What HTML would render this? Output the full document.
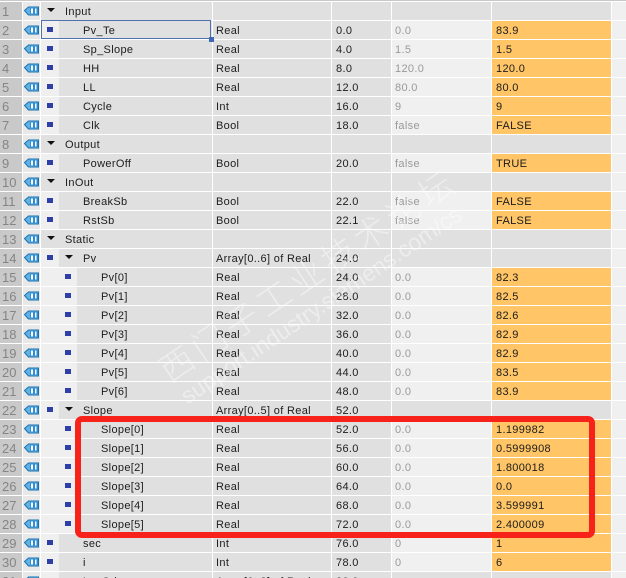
<!DOCTYPE html>
<html><head><meta charset="utf-8">
<style>
html,body{margin:0;padding:0;background:#fff}
#p{position:relative;width:626px;height:578px;overflow:hidden;background:#fff;font:11px/18px "Liberation Sans","Noto Sans CJK SC",sans-serif;letter-spacing:.33px;color:#1c1c1c}
#p>.top{position:absolute;left:0;top:0;width:626px;height:1px;background:#c8c8c8}
.r{position:absolute;left:0;width:626px;height:18px}
.r>*{position:absolute;top:0;height:18px;white-space:nowrap;line-height:20px;overflow:hidden}
.n{left:0;width:22px;background:#c9c9c9;color:#858585;font-size:13px;padding-left:2px;box-sizing:border-box;letter-spacing:0}
.ic{left:23px;width:17px;background:#e8e8e8}
.ic svg{position:absolute;left:1px;top:3px}
.a{left:41px;width:171px;background:#e0e0e0}
.l1:before,.l2:before{content:"";position:absolute;left:0;top:0;height:18px;background:#efefef}
.l1:before{width:18px}.l2:before{width:36px}
.a i{position:absolute}
.q{width:6px;height:5px;top:6px;background:#2f3fa8}
.t{width:0;height:0;top:6px;border-left:4px solid transparent;border-right:4px solid transparent;border-top:4px solid #111}
.a b{position:absolute;top:0;font-weight:normal}
.b{left:213px;width:118px;background:#e0e0e0;padding-left:3px;box-sizing:border-box}
.c{left:332px;width:59px;background:#e0e0e0;padding-left:4px;box-sizing:border-box}
.d{left:392px;width:99px;background:#f0f0f0;color:#9a9a9a;padding-left:3px;box-sizing:border-box}
.e{left:492px;width:119px;background:#ffc566;padding-left:4px;box-sizing:border-box}
.f{left:612px;width:14px;background:#f0f0f0}
.h .d,.h .e{background:#e0e0e0}
.wm{position:absolute;color:rgba(255,255,255,.42);white-space:nowrap;transform-origin:0 50%;letter-spacing:0}
</style></head><body>
<div id="p">
<svg width="0" height="0" style="position:absolute"><defs><g id="g"><path d="M.5 5.5 4.5 2H14.5V10H4.5Z" fill="#5fb4e6" stroke="#1d6fae" stroke-width="1"/><rect x="6" y="3" width="8" height="6" fill="#2e8fd4"/><rect x="7" y="3.5" width="2" height="5" fill="#fff"/><rect x="11" y="3.5" width="1.5" height="5" fill="#fff"/></g></defs></svg>
<div class="top"></div>

<div class="r h" style="top:2px"><span class="n">1</span><span class="ic"><svg width="16" height="12"><use href="#g"/></svg></span><span class="a"><i class="t" style="left:6px"></i><b style="left:24px">Input</b></span><span class="b"></span><span class="c"></span><span class="d"></span><span class="e"></span><span class="f"></span></div>
<div class="r" style="top:21px"><span class="n">2</span><span class="ic"><svg width="16" height="12"><use href="#g"/></svg></span><span class="a l1"><i class="q" style="left:6px"></i><b style="left:42px">Pv_Te</b></span><span class="b">Real</span><span class="c">0.0</span><span class="d">0.0</span><span class="e">83.9</span><span class="f"></span></div>
<div class="r" style="top:40px"><span class="n">3</span><span class="ic"><svg width="16" height="12"><use href="#g"/></svg></span><span class="a l1"><i class="q" style="left:6px"></i><b style="left:42px">Sp_Slope</b></span><span class="b">Real</span><span class="c">4.0</span><span class="d">1.5</span><span class="e">1.5</span><span class="f"></span></div>
<div class="r" style="top:59px"><span class="n">4</span><span class="ic"><svg width="16" height="12"><use href="#g"/></svg></span><span class="a l1"><i class="q" style="left:6px"></i><b style="left:42px">HH</b></span><span class="b">Real</span><span class="c">8.0</span><span class="d">120.0</span><span class="e">120.0</span><span class="f"></span></div>
<div class="r" style="top:78px"><span class="n">5</span><span class="ic"><svg width="16" height="12"><use href="#g"/></svg></span><span class="a l1"><i class="q" style="left:6px"></i><b style="left:42px">LL</b></span><span class="b">Real</span><span class="c">12.0</span><span class="d">80.0</span><span class="e">80.0</span><span class="f"></span></div>
<div class="r" style="top:97px"><span class="n">6</span><span class="ic"><svg width="16" height="12"><use href="#g"/></svg></span><span class="a l1"><i class="q" style="left:6px"></i><b style="left:42px">Cycle</b></span><span class="b">Int</span><span class="c">16.0</span><span class="d">9</span><span class="e">9</span><span class="f"></span></div>
<div class="r" style="top:116px"><span class="n">7</span><span class="ic"><svg width="16" height="12"><use href="#g"/></svg></span><span class="a l1"><i class="q" style="left:6px"></i><b style="left:42px">Clk</b></span><span class="b">Bool</span><span class="c">18.0</span><span class="d">false</span><span class="e">FALSE</span><span class="f"></span></div>
<div class="r h" style="top:135px"><span class="n">8</span><span class="ic"><svg width="16" height="12"><use href="#g"/></svg></span><span class="a"><i class="t" style="left:6px"></i><b style="left:24px">Output</b></span><span class="b"></span><span class="c"></span><span class="d"></span><span class="e"></span><span class="f"></span></div>
<div class="r" style="top:154px"><span class="n">9</span><span class="ic"><svg width="16" height="12"><use href="#g"/></svg></span><span class="a l1"><i class="q" style="left:6px"></i><b style="left:42px">PowerOff</b></span><span class="b">Bool</span><span class="c">20.0</span><span class="d">false</span><span class="e">TRUE</span><span class="f"></span></div>
<div class="r h" style="top:173px"><span class="n">10</span><span class="ic"><svg width="16" height="12"><use href="#g"/></svg></span><span class="a"><i class="t" style="left:6px"></i><b style="left:24px">InOut</b></span><span class="b"></span><span class="c"></span><span class="d"></span><span class="e"></span><span class="f"></span></div>
<div class="r" style="top:192px"><span class="n">11</span><span class="ic"><svg width="16" height="12"><use href="#g"/></svg></span><span class="a l1"><i class="q" style="left:6px"></i><b style="left:42px">BreakSb</b></span><span class="b">Bool</span><span class="c">22.0</span><span class="d">false</span><span class="e">FALSE</span><span class="f"></span></div>
<div class="r" style="top:211px"><span class="n">12</span><span class="ic"><svg width="16" height="12"><use href="#g"/></svg></span><span class="a l1"><i class="q" style="left:6px"></i><b style="left:42px">RstSb</b></span><span class="b">Bool</span><span class="c">22.1</span><span class="d">false</span><span class="e">FALSE</span><span class="f"></span></div>
<div class="r h" style="top:230px"><span class="n">13</span><span class="ic"><svg width="16" height="12"><use href="#g"/></svg></span><span class="a"><i class="t" style="left:6px"></i><b style="left:24px">Static</b></span><span class="b"></span><span class="c"></span><span class="d"></span><span class="e"></span><span class="f"></span></div>
<div class="r h" style="top:249px"><span class="n">14</span><span class="ic"><svg width="16" height="12"><use href="#g"/></svg></span><span class="a l1"><i class="q" style="left:6px"></i><i class="t" style="left:24px"></i><b style="left:42px">Pv</b></span><span class="b">Array[0..6] of Real</span><span class="c">24.0</span><span class="d"></span><span class="e"></span><span class="f"></span></div>
<div class="r" style="top:268px"><span class="n">15</span><span class="ic"><svg width="16" height="12"><use href="#g"/></svg></span><span class="a l2"><i class="q" style="left:24px"></i><b style="left:60px">Pv[0]</b></span><span class="b">Real</span><span class="c">24.0</span><span class="d">0.0</span><span class="e">82.3</span><span class="f"></span></div>
<div class="r" style="top:287px"><span class="n">16</span><span class="ic"><svg width="16" height="12"><use href="#g"/></svg></span><span class="a l2"><i class="q" style="left:24px"></i><b style="left:60px">Pv[1]</b></span><span class="b">Real</span><span class="c">28.0</span><span class="d">0.0</span><span class="e">82.5</span><span class="f"></span></div>
<div class="r" style="top:306px"><span class="n">17</span><span class="ic"><svg width="16" height="12"><use href="#g"/></svg></span><span class="a l2"><i class="q" style="left:24px"></i><b style="left:60px">Pv[2]</b></span><span class="b">Real</span><span class="c">32.0</span><span class="d">0.0</span><span class="e">82.6</span><span class="f"></span></div>
<div class="r" style="top:325px"><span class="n">18</span><span class="ic"><svg width="16" height="12"><use href="#g"/></svg></span><span class="a l2"><i class="q" style="left:24px"></i><b style="left:60px">Pv[3]</b></span><span class="b">Real</span><span class="c">36.0</span><span class="d">0.0</span><span class="e">82.9</span><span class="f"></span></div>
<div class="r" style="top:344px"><span class="n">19</span><span class="ic"><svg width="16" height="12"><use href="#g"/></svg></span><span class="a l2"><i class="q" style="left:24px"></i><b style="left:60px">Pv[4]</b></span><span class="b">Real</span><span class="c">40.0</span><span class="d">0.0</span><span class="e">82.9</span><span class="f"></span></div>
<div class="r" style="top:363px"><span class="n">20</span><span class="ic"><svg width="16" height="12"><use href="#g"/></svg></span><span class="a l2"><i class="q" style="left:24px"></i><b style="left:60px">Pv[5]</b></span><span class="b">Real</span><span class="c">44.0</span><span class="d">0.0</span><span class="e">83.5</span><span class="f"></span></div>
<div class="r" style="top:382px"><span class="n">21</span><span class="ic"><svg width="16" height="12"><use href="#g"/></svg></span><span class="a l2"><i class="q" style="left:24px"></i><b style="left:60px">Pv[6]</b></span><span class="b">Real</span><span class="c">48.0</span><span class="d">0.0</span><span class="e">83.9</span><span class="f"></span></div>
<div class="r h" style="top:401px"><span class="n">22</span><span class="ic"><svg width="16" height="12"><use href="#g"/></svg></span><span class="a l1"><i class="q" style="left:6px"></i><i class="t" style="left:24px"></i><b style="left:42px">Slope</b></span><span class="b">Array[0..5] of Real</span><span class="c">52.0</span><span class="d"></span><span class="e"></span><span class="f"></span></div>
<div class="r" style="top:420px"><span class="n">23</span><span class="ic"><svg width="16" height="12"><use href="#g"/></svg></span><span class="a l2"><i class="q" style="left:24px"></i><b style="left:60px">Slope[0]</b></span><span class="b">Real</span><span class="c">52.0</span><span class="d">0.0</span><span class="e">1.199982</span><span class="f"></span></div>
<div class="r" style="top:439px"><span class="n">24</span><span class="ic"><svg width="16" height="12"><use href="#g"/></svg></span><span class="a l2"><i class="q" style="left:24px"></i><b style="left:60px">Slope[1]</b></span><span class="b">Real</span><span class="c">56.0</span><span class="d">0.0</span><span class="e">0.5999908</span><span class="f"></span></div>
<div class="r" style="top:458px"><span class="n">25</span><span class="ic"><svg width="16" height="12"><use href="#g"/></svg></span><span class="a l2"><i class="q" style="left:24px"></i><b style="left:60px">Slope[2]</b></span><span class="b">Real</span><span class="c">60.0</span><span class="d">0.0</span><span class="e">1.800018</span><span class="f"></span></div>
<div class="r" style="top:477px"><span class="n">26</span><span class="ic"><svg width="16" height="12"><use href="#g"/></svg></span><span class="a l2"><i class="q" style="left:24px"></i><b style="left:60px">Slope[3]</b></span><span class="b">Real</span><span class="c">64.0</span><span class="d">0.0</span><span class="e">0.0</span><span class="f"></span></div>
<div class="r" style="top:496px"><span class="n">27</span><span class="ic"><svg width="16" height="12"><use href="#g"/></svg></span><span class="a l2"><i class="q" style="left:24px"></i><b style="left:60px">Slope[4]</b></span><span class="b">Real</span><span class="c">68.0</span><span class="d">0.0</span><span class="e">3.599991</span><span class="f"></span></div>
<div class="r" style="top:515px"><span class="n">28</span><span class="ic"><svg width="16" height="12"><use href="#g"/></svg></span><span class="a l2"><i class="q" style="left:24px"></i><b style="left:60px">Slope[5]</b></span><span class="b">Real</span><span class="c">72.0</span><span class="d">0.0</span><span class="e">2.400009</span><span class="f"></span></div>
<div class="r" style="top:534px"><span class="n">29</span><span class="ic"><svg width="16" height="12"><use href="#g"/></svg></span><span class="a l1"><i class="q" style="left:6px"></i><b style="left:42px">sec</b></span><span class="b">Int</span><span class="c">76.0</span><span class="d">0</span><span class="e">1</span><span class="f"></span></div>
<div class="r" style="top:553px"><span class="n">30</span><span class="ic"><svg width="16" height="12"><use href="#g"/></svg></span><span class="a l1"><i class="q" style="left:6px"></i><b style="left:42px">i</b></span><span class="b">Int</span><span class="c">78.0</span><span class="d">0</span><span class="e">6</span><span class="f"></span></div>
<div class="r h" style="top:572px"><span class="n">31</span><span class="ic"><svg width="16" height="12"><use href="#g"/></svg></span><span class="a l1"><i class="q" style="left:6px"></i><i class="t" style="left:24px"></i><b style="left:42px">Lv_Ode</b></span><span class="b">Array[0..8] of Real</span><span class="c">80.0</span><span class="d"></span><span class="e"></span><span class="f"></span></div>

<div style="position:absolute;left:41px;top:20px;width:170px;height:19px;box-sizing:border-box;border:1px solid #4f72ad"></div>
<div style="position:absolute;left:209px;top:37px;width:5px;height:5px;background:#3f68b5"></div>

<div class="wm" style="left:162px;top:352px;font-size:34px;line-height:40px;letter-spacing:5px;font-family:'Noto Sans CJK SC',sans-serif;font-weight:300;transform:rotate(-34deg)">西门子工业技术论坛</div>
<div class="wm" style="left:183px;top:384px;font-size:23px;line-height:28px;font-family:'Liberation Sans',sans-serif;transform:rotate(-34deg)">support.industry.siemens.com/cs</div>

<div style="position:absolute;left:75px;top:416px;width:520px;height:122px;box-sizing:border-box;border:6px solid #f7231a;border-radius:7px"></div>
</div>
</body></html>
